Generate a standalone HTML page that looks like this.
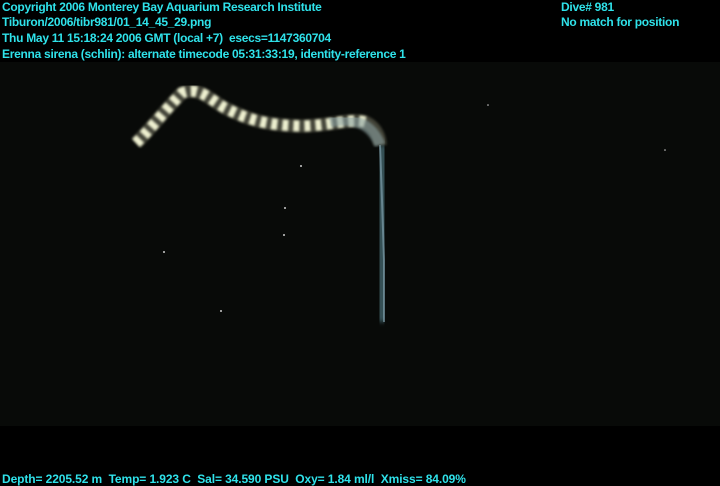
<!DOCTYPE html>
<html><head><style>
body{margin:0;width:720px;height:486px;background:#000;overflow:hidden;position:relative;font-family:"Liberation Sans",sans-serif;}
.t{position:absolute;color:#2fe2ea;font-size:12px;font-weight:bold;letter-spacing:-0.28px;white-space:nowrap;line-height:14px;}
#img{position:absolute;left:0;top:62px;width:720px;height:364px;background:#080a08;}
</style></head><body>
<div id="img"></div>
<svg style="position:absolute;left:0;top:0" width="720" height="486">
<defs><filter id="b"><feGaussianBlur stdDeviation="1.2"/></filter><filter id="b2"><feGaussianBlur stdDeviation="2.5"/></filter></defs>
<path d="M380 145 L382 200 L384 260 L384 322" stroke="#5a8a94" stroke-width="16" fill="none" opacity="0.55" filter="url(#b2)"/>
<path d="M380 145 L382 200 L384 260 L384 322" stroke="#9bc" stroke-width="2" fill="none" opacity="0.5"/>
<path d="M136 143 C150 130 165 110 182 93 C200 86 210 100 225 108 C245 118 262 125 300 126 C330 126 350 118 365 122 C378 128 380 140 380 145" stroke="#6a6a58" stroke-width="13" fill="none" opacity="0.6" filter="url(#b)"/>
<path d="M136 143 C150 130 165 110 182 93 C200 86 210 100 225 108 C245 118 262 125 300 126 C330 126 350 118 365 122" stroke="#eef0d0" stroke-width="11" fill="none" stroke-dasharray="6 5" filter="url(#b)"/>
<path d="M330 122 C350 118 370 120 380 145" stroke="#8aa0a0" stroke-width="11" fill="none" opacity="0.6" filter="url(#b)"/>
<g fill="#ccc"><circle cx="301" cy="166" r="1"/><circle cx="285" cy="208" r="1"/><circle cx="284" cy="235" r="1"/><circle cx="164" cy="252" r="1"/><circle cx="221" cy="311" r="1"/><circle cx="665" cy="150" r="0.8"/><circle cx="488" cy="105" r="0.8"/></g>
</svg>
<div class="t" style="left:2px;top:0px">Copyright 2006 Monterey Bay Aquarium Research Institute</div>
<div class="t" style="left:2px;top:15px">Tiburon/2006/tibr981/01_14_45_29.png</div>
<div class="t" style="left:2px;top:31px">Thu May 11 15:18:24 2006 GMT (local +7)&nbsp; esecs=1147360704</div>
<div class="t" style="left:2px;top:47px">Erenna sirena (schlin): alternate timecode 05:31:33:19, identity-reference 1</div>
<div class="t" style="left:561px;top:0px">Dive# 981</div>
<div class="t" style="left:561px;top:15px">No match for position</div>
<div class="t" style="left:2px;top:472px;letter-spacing:-0.1px">Depth= 2205.52 m&nbsp; Temp= 1.923 C&nbsp; Sal= 34.590 PSU&nbsp; Oxy= 1.84 ml/l&nbsp; Xmiss= 84.09%</div>
</body></html>
